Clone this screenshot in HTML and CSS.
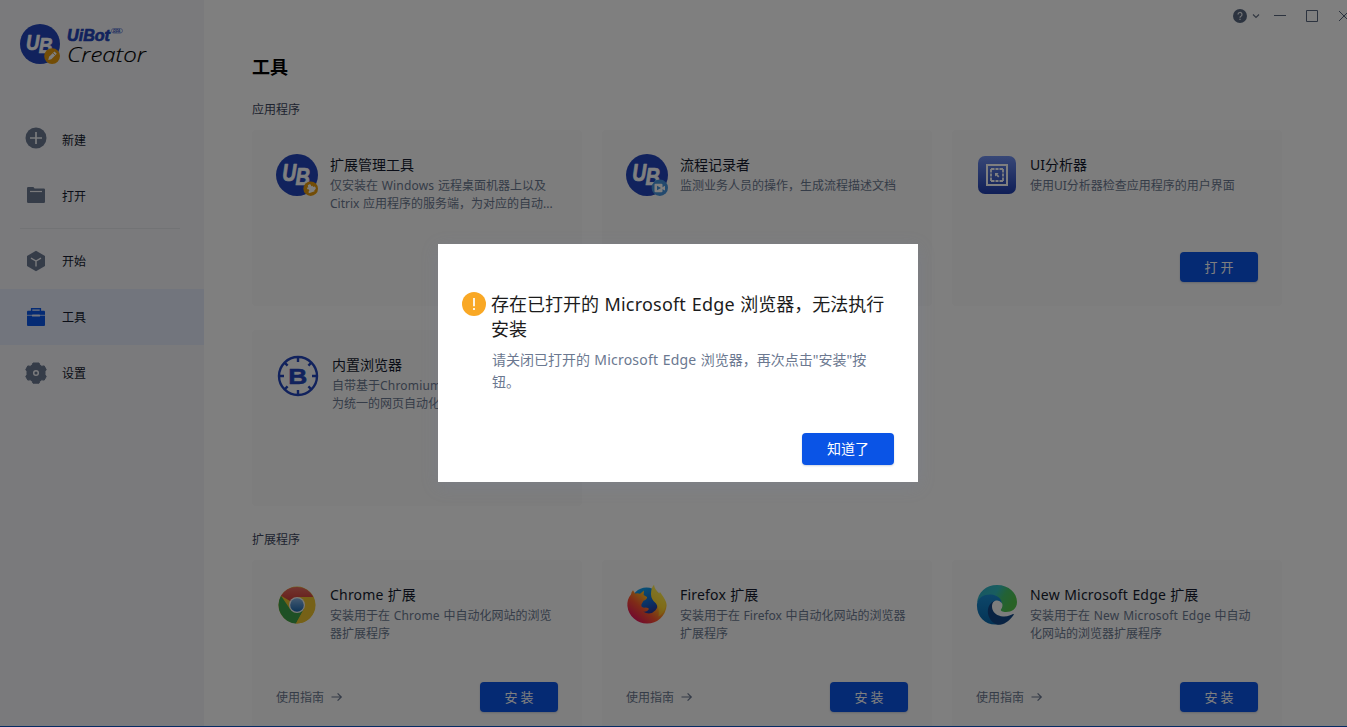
FILE: index.html
```html
<!DOCTYPE html>
<html lang="zh-CN">
<head>
<meta charset="utf-8">
<title>UiBot Creator</title>
<link rel="stylesheet" href="styles.css">
</head>
<body>
<svg class="defs" width="0" height="0">
  <defs>
    <linearGradient id="violet" x1="0" y1="0" x2="0" y2="1"><stop offset="0" stop-color="#6f8fee"/><stop offset="1" stop-color="#1f3dae"/></linearGradient>
    <linearGradient id="chromeBlue" x1="0" y1="0" x2="0" y2="1"><stop offset="0" stop-color="#86b4e4"/><stop offset="1" stop-color="#1c68ae"/></linearGradient>
    <linearGradient id="chromeRed" x1="0" y1="0" x2="0" y2="1"><stop offset="0" stop-color="#e46c60"/><stop offset="1" stop-color="#c9302c"/></linearGradient>
    <linearGradient id="foxBody" x1=".9" y1=".1" x2=".15" y2=".85"><stop offset="0" stop-color="#fff24a"/><stop offset=".35" stop-color="#ffb020"/><stop offset=".65" stop-color="#ff5530"/><stop offset="1" stop-color="#e4155c"/></linearGradient>
    <linearGradient id="foxTail" x1=".6" y1="0" x2=".3" y2="1"><stop offset="0" stop-color="#fff25a"/><stop offset=".6" stop-color="#ffd830"/><stop offset="1" stop-color="#ffa020"/></linearGradient>
    <linearGradient id="foxGlobe" x1=".3" y1="0" x2=".7" y2="1"><stop offset="0" stop-color="#10a5f0"/><stop offset=".55" stop-color="#1560c8"/><stop offset="1" stop-color="#391e78"/></linearGradient>
    <linearGradient id="edgeTop" x1="0" y1="0" x2="1" y2=".4"><stop offset="0" stop-color="#2fa8c8"/><stop offset=".5" stop-color="#33bdc0"/><stop offset=".72" stop-color="#46c46c"/><stop offset="1" stop-color="#52c44c"/></linearGradient>
    <linearGradient id="edgeMid" x1="0" y1="0" x2="0" y2="1"><stop offset="0" stop-color="#1b8ed4"/><stop offset="1" stop-color="#0868ac"/></linearGradient>
    <symbol id="ub" viewBox="0 0 42 42">
      <circle cx="21" cy="21" r="21" fill="#2345ba"/>
      <g class="ub-letters"><text x="6.2" y="27" textLength="14" lengthAdjust="spacingAndGlyphs">U</text><text x="19.6" y="30.500" textLength="14.5" lengthAdjust="spacingAndGlyphs">B</text></g>
    </symbol>
    <symbol id="arrow" viewBox="0 0 12 10"><path d="M.5 5h9.8M6.600 1.300 10.300 5 6.600 8.700" fill="none" stroke="currentColor" stroke-width="1.200"/></symbol>
  </defs>
</svg>
<div class="app">
  <aside class="sidebar">
    <div class="brand">
      <svg width="40" height="40" viewBox="0 0 42 42"><use href="#ub"/><circle cx="33.7" cy="33.7" r="8.3" fill="#e69b0d"/><path d="m29.7 37.7.8-3.2 5.7-5.7 2.4 2.4-5.7 5.7z" fill="#fff"/><path d="m34.5 30.3 2.6 2.6" stroke="#e69b0d" stroke-width=".8"/></svg>
      <svg class="wordmark" width="84" height="46" viewBox="0 0 84 46">
        <text class="word-uibot" x="0" y="16.500" textLength="43" lengthAdjust="spacingAndGlyphs">UiBot</text>
        <rect x="44.500" y="4.500" width="11" height="4.600" rx="2.300" fill="none" stroke="#6d84d4" stroke-width=".7"/>
        <text class="word-rpa" x="46" y="8.500" textLength="7.500" lengthAdjust="spacingAndGlyphs">RPA</text>
        <text class="word-creator" x="0" y="38" textLength="79" lengthAdjust="spacingAndGlyphs">Creator</text>
      </svg>
    </div>
    <nav class="nav">
      <a class="nav-item first"><svg width="22" height="22" viewBox="0 0 22 22"><circle cx="11" cy="11" r="10.500" fill="#6b7890"/><path d="M11 5v12M5 11h12" stroke="#f4f5f9" stroke-width="1.700"/></svg><span>新建</span></a>
      <a class="nav-item second"><svg width="22" height="22" viewBox="0 0 22 22"><path d="M2 4.200q0-1.200 1.200-1.200h5.200l1.200 1.400h9.200q1.200 0 1.200 1.200v12.200q0 1.200-1.200 1.200H3.200q-1.200 0-1.200-1.200z" fill="#6b7890"/><path d="M5 7.500h12" stroke="#f4f5f9" stroke-width="1.200"/></svg><span>打开</span></a>
      <hr class="nav-line">
      <a class="nav-item"><svg width="22" height="22" viewBox="0 0 22 22"><path d="m11 .8 9 5.100v10.200l-9 5.200-9-5.200V5.900z" fill="#6b7890"/><path d="m6 8.200 5 2.800 5-2.800M11 11v5.500" fill="none" stroke="#f4f5f9" stroke-width="1.400"/></svg><span>开始</span></a>
      <a class="nav-item active"><svg width="22" height="22" viewBox="0 0 22 22"><path d="M6.600 5V2.700h8.800V5" fill="none" stroke="#0a56e8" stroke-width="1.400"/><rect x="2" y="4.700" width="18" height="15.300" rx="1" fill="#0a56e8"/><path d="M2 9.300h5M15 9.300h5" stroke="#e4ecfe" stroke-width=".8"/><rect x="7" y="8.400" width="8" height="2.100" rx=".5" fill="#e4ecfe"/></svg><span>工具</span></a>
      <a class="nav-item"><svg width="22" height="22" viewBox="0 0 22 22"><path d="M8 1h6l1 2.300 1.800 1 2.400-.4 2 3.700L20 9.500v3l1.200 2-2 3.600-2.400-.3-1.800 1-1 2.400H8l-1-2.400-1.800-1-2.400.3-2-3.600 1.200-2v-3L.8 7.600l2-3.700 2.400.4 1.800-1z" fill="#6b7890" stroke="#6b7890" stroke-linejoin="round"/><circle cx="11" cy="11" r="2.300" fill="#6b7890" stroke="#f4f5f9" stroke-width="1.500"/></svg><span>设置</span></a>
    </nav>
  </aside>

  <main class="main">
    <div class="window-bar">
      <svg width="28" height="16" viewBox="0 0 28 16"><circle cx="7" cy="8" r="7" fill="#58677f"/><path d="M5 6.500a2 2 0 1 1 3 1.700q-1 .5-1 1.600M7 10.700v1.400" fill="none" stroke="#e8eaee" stroke-width="1.200"/><path d="m20 6.500 3 3 3-3" fill="none" stroke="#667085" stroke-width="1.200"/></svg>
      <svg width="12" height="12" viewBox="0 0 12 12"><path d="M0 5.500h12" stroke="#58677f"/></svg>
      <svg width="12" height="12" viewBox="0 0 12 12"><path d="M.5.500h11v11H.5z" fill="none" stroke="#58677f"/></svg>
      <svg width="12" height="12" viewBox="0 0 12 12"><path d="m1 1 10 10M11 1 1 11" stroke="#58677f"/></svg>
    </div>
    <h1 class="page-title">工具</h1>
    <h2 class="section-title">应用程序</h2>
    <div class="grid">
      <article class="card">
        <div class="card-head">
          <svg width="42" height="42" viewBox="0 0 42 42"><use href="#ub"/><circle cx="34.700" cy="34.700" r="7.300" fill="#e69b0d"/><g transform="rotate(-20 34.700 34.700)" fill="#fff"><rect x="31.500" y="32.500" width="6" height="6"/><circle cx="34.500" cy="31.800" r="1.700"/><circle cx="38" cy="35.500" r="1.700"/></g><circle cx="32" cy="36.500" r="1.200" fill="#e69b0d"/></svg>
          <div class="card-text"><h3>扩展管理工具</h3><p>仅安装在 <span class="en">Windows</span> 远程桌面机器上以及<br>Citrix 应用程序的服务端，为对应的自动...</p></div>
        </div>
      </article>
      <article class="card">
        <div class="card-head">
          <svg width="42" height="42" viewBox="0 0 42 42"><use href="#ub"/><circle cx="33.800" cy="33.800" r="8.200" fill="#4694dc"/><rect x="28.500" y="29.700" width="8" height="8.500" rx="1" fill="#fff"/><path d="m36 33.500 3-1.800v4.800l-3-1.500z" fill="#fff"/><path d="m31 31.700 4 2.300-4 2.300z" fill="#4694dc"/></svg>
          <div class="card-text"><h3>流程记录者</h3><p>监测业务人员的操作，生成流程描述文档</p></div>
        </div>
      </article>
      <article class="card">
        <div class="card-head">
          <svg width="42" height="42" viewBox="0 0 42 42"><rect x="2" y="2" width="38" height="38" rx="7" fill="url(#violet)"/><rect x="11" y="11" width="20" height="20" fill="none" stroke="#fff" stroke-width="2"/><rect x="15" y="15" width="12" height="12" fill="none" stroke="#fff" stroke-width="1.800" stroke-dasharray="3.500 1 3 1 3.500 0"/><path d="M19 19h3.600l-1.200 1.200 2 2-1.200 1.200-2-2L19 22.600z" fill="#fff"/></svg>
          <div class="card-text"><h3>UI分析器</h3><p>使用UI分析器检查应用程序的用户界面</p></div>
        </div>
        <div class="card-foot"><button class="btn spaced">打开</button></div>
      </article>
      <article class="card">
        <div class="card-head">
          <svg width="44" height="44" viewBox="0 0 44 44"><circle cx="22" cy="22" r="19" fill="none" stroke="#2345ba" stroke-width="2.400"/><g stroke="#2345ba" stroke-width="2.400"><path d="M22 3v5M22 36v5M3 22h5M36 22h5M8.600 8.600l3 3M32.400 32.400l3 3M35.400 8.600l-3 3M11.600 32.400l-3 3"/></g><text class="b-letter" x="12.300" y="29.700" textLength="19" lengthAdjust="spacingAndGlyphs">B</text></svg>
          <div class="card-text"><h3>内置浏览器</h3><p>自带基于<span class="en">Chromium</span>内核，作<br>为统一的网页自动化环境</p></div>
        </div>
      </article>
    </div>
    <h2 class="section-title lower">扩展程序</h2>
    <div class="grid">
      <article class="card">
        <div class="card-head">
          <svg width="42" height="42" viewBox="0 0 42 42"><circle cx="21" cy="21" r="18.500" fill="#ecc22f"/><path d="M21 21 5 11.800A18.500 18.500 0 0 1 37.300 13H21z" fill="url(#chromeRed)"/><path d="M5 11.800 14 25l7 4-1 10.500A18.500 18.500 0 0 1 5 11.800z" fill="#3da04a"/><path d="m14 25 14 0-8 14.500-2-9.500z" fill="#3da04a"/><path d="m27.900 25-7.900 14.500A18.500 18.500 0 0 0 37.300 13H21z" fill="#ecc22f"/><circle cx="21" cy="21" r="8" fill="#f4f4f4"/><circle cx="21" cy="21" r="6.800" fill="url(#chromeBlue)"/></svg>
          <div class="card-text"><h3><span class="en">Chrome</span> 扩展</h3><p>安装用于在 <span class="en">Chrome</span> 中自动化网站的浏览<br>器扩展程序</p></div>
        </div>
        <div class="card-foot"><a class="guide"><span>使用指南</span><svg width="12" height="10"><use href="#arrow"/></svg></a><button class="btn spaced">安装</button></div>
      </article>
      <article class="card">
        <div class="card-head">
          <svg width="42" height="42" viewBox="0 0 42 42"><circle cx="20.500" cy="19" r="15.500" fill="url(#foxGlobe)"/><path d="M7 6.300 9 9.500q3-.8 5 .2l4-3.200-.3 4.500 3.300 2q.5 2-3.500 3.800l-2 3.500q-.8 3 2.500 3.500 2.500-.8 5 1-1.500 3.300-6 2.800 7 4.600 12.500-1.300 4-5.300 0-9.800L34 8l3.400 5q3.300 5 3.200 8.700A19.700 19.700 0 0 1 1.400 22Q1 15 5 10.500 5.200 8 7 6.300z" fill="url(#foxBody)"/><path d="M28 .8q.5 5 5.500 8.700 5.500 4.500 6 12-1 8-7 11 1.500-7-2.500-13-5-4-5-9.500 0-6 3-9.200z" fill="url(#foxTail)"/></svg>
          <div class="card-text"><h3><span class="en">Firefox</span> 扩展</h3><p>安装用于在 Firefox 中自动化网站的浏览器<br>扩展程序</p></div>
        </div>
        <div class="card-foot"><a class="guide"><span>使用指南</span><svg width="12" height="10"><use href="#arrow"/></svg></a><button class="btn spaced">安装</button></div>
      </article>
      <article class="card">
        <div class="card-head">
          <svg width="42" height="42" viewBox="0 0 42 42"><path d="M1 19C2 8 10 1 21 1c12 0 20 8 20 17 0 7-5.500 10-11 10-3.500 0-6-1.500-5-2.500 3.500-4.500.5-9.500-4-11-8-2.500-17-1-20 4.500z" fill="url(#edgeTop)"/><path d="M1 20c1-7 8-10 14-9.500 6 .5 10.500 4 11 9-1.500-2.500-4-3.500-6-3-8 2-8 17 4 23.500C11 43 0 33 1 20z" fill="url(#edgeMid)"/><path d="M18.500 16.800C14 20 15 31.500 27 32.500c5 .3 8-1.500 10-2.500.8-.3 1 .3.600 1C33 37.500 28 40.800 22 40.800 10 37.500 8.500 21 18.500 16.800z" fill="#124686"/></svg>
          <div class="card-text"><h3><span class="en">New Microsoft Edge</span> 扩展</h3><p>安装用于在 <span class="en">New Microsoft Edge</span> 中自动<br>化网站的浏览器扩展程序</p></div>
        </div>
        <div class="card-foot"><a class="guide"><span>使用指南</span><svg width="12" height="10"><use href="#arrow"/></svg></a><button class="btn spaced">安装</button></div>
      </article>
    </div>
  </main>
</div>
<div class="mask">
  <section class="dialog" role="dialog">
    <div class="dialog-body">
      <svg width="24" height="24" viewBox="0 0 24 24"><circle cx="12" cy="12" r="12" fill="#f9a825"/><path d="M12 6v8.200M12 16v2" stroke="#fff" stroke-width="1.700"/></svg>
      <div class="dialog-text">
        <h2>存在已打开的 <span class="en">Microsoft Edge</span> 浏览器，无法执行<br>安装</h2>
        <p>请关闭已打开的 <span class="en">Microsoft Edge</span> 浏览器，再次点击"安装"按<br>钮。</p>
      </div>
    </div>
    <div class="dialog-foot"><button class="btn ok">知道了</button></div>
  </section>
</div>
</body>
</html>
```
FILE: styles.css
```css
* { box-sizing: border-box; }
body, h1, h2, h3, p { margin: 0; font-weight: 400; }
body {
  width: 100vw; height: 100vh; overflow: hidden;
  font: 12px/18px "Noto Sans", "Noto Sans CJK SC", sans-serif;
  color: #141a2e; background: #fff;
}
svg { display: block; flex: none; }
h2, h3, p { word-spacing: .5px; }
.en { letter-spacing: .2px; }
.defs { position: absolute; }
.ub-letters { font: italic 700 23px "Liberation Sans", sans-serif; fill: #fff; stroke: #fff; stroke-width: .7; stroke-linejoin: round; }
.b-letter { font: 700 22px "Liberation Sans", sans-serif; fill: #2345ba; stroke: #2345ba; stroke-width: .5; }
.app { display: flex; height: 100vh; overflow: hidden; border-bottom: 1px solid #0a56c8; }

.sidebar { width: 204px; flex: none; background: #f4f5f9; padding-top: 24px; }
.brand { display: flex; gap: 7px; height: 88px; padding-left: 20px; }
.wordmark { overflow: visible; }
.word-uibot { font: italic 700 17px "Liberation Sans", sans-serif; fill: #2345ba; stroke: #2345ba; stroke-width: .7; }
.word-rpa { font: italic 700 4.500px "Liberation Sans", sans-serif; fill: #2345ba; }
.word-creator { font: italic 300 20.500px "Open Sans", sans-serif; fill: #000; stroke: #000; stroke-width: .15; }
.nav-item { display: flex; align-items: center; gap: 15px; height: 56px; padding-left: 25px; }
.nav-item span { padding-top: 2px; }
.nav-item.first svg { margin-top: -4px; }
.nav-item.second svg { margin-top: -2px; }
.nav-item.active { background: #e4ebfb; }
.nav-line { width: 160px; height: 1px; margin: 4px 20px; border: 0; background: #e4e6ea; }

.main { flex: 1; min-width: 0; padding: 0 0 0 48px; }
.window-bar { display: flex; align-items: center; justify-content: flex-end; gap: 20px; height: 32px; margin-right: -3px; }
.window-bar svg:first-child { margin-right: -7px; }
.page-title { margin-top: 21px; font-size: 18px; line-height: 28px; font-weight: 700; color: #000; }
.section-title { margin-top: 20px; margin-bottom: 11px; font-size: 12px; line-height: 18px; color: #3c465e; }
.section-title.lower { margin-top: 25px; }
.grid { display: grid; grid-template-columns: repeat(3, 330px); grid-auto-rows: 176px; gap: 24px 20px; }
.card { display: flex; flex-direction: column; justify-content: space-between; padding: 24px; border-radius: 4px; background: #fafafa; }
.card-head { display: flex; gap: 12px; white-space: nowrap; }
.card-text h3 { font-size: 14px; line-height: 22px; color: #141a2e; }
.card-text p { margin-top: 1px; color: #6b7890; }
.card-foot { display: flex; align-items: center; height: 30px; }
.guide { display: flex; align-items: center; gap: 7px; color: #6b7890; }
.guide span { padding-top: 2px; }
.btn {
  margin-left: auto; padding: 0; width: 78px; height: 30px; border: 0; border-radius: 4px;
  background: #0a54e6; color: #fff; font: inherit; font-size: 13px; box-shadow: 0 1px 2px rgba(10, 40, 100, .2);
}
.spaced { letter-spacing: 3px; text-indent: 3px; }

.mask { position: absolute; inset: 0; display: flex; justify-content: center; align-items: flex-start; padding: 244px 0 0 9px; background: rgba(0, 0, 0, .5); }
.dialog { width: 480px; height: 238px; padding: 48px 24px 17px; display: flex; flex-direction: column; justify-content: space-between; background: #fff; box-shadow: 0 4px 16px rgba(120, 130, 170, .22); }
.dialog-body { display: flex; gap: 5px; white-space: nowrap; }
.dialog-text h2 { font-size: 18px; line-height: 25px; word-spacing: .8px; color: #1c1c1c; }
.dialog-text p { margin-top: 7px; padding-left: 1px; font-size: 14px; line-height: 22px; color: #6b7890; word-spacing: .7px; }
.dialog-foot { display: flex; }
.ok { width: 92px; height: 32px; font-size: 14px; }
```
